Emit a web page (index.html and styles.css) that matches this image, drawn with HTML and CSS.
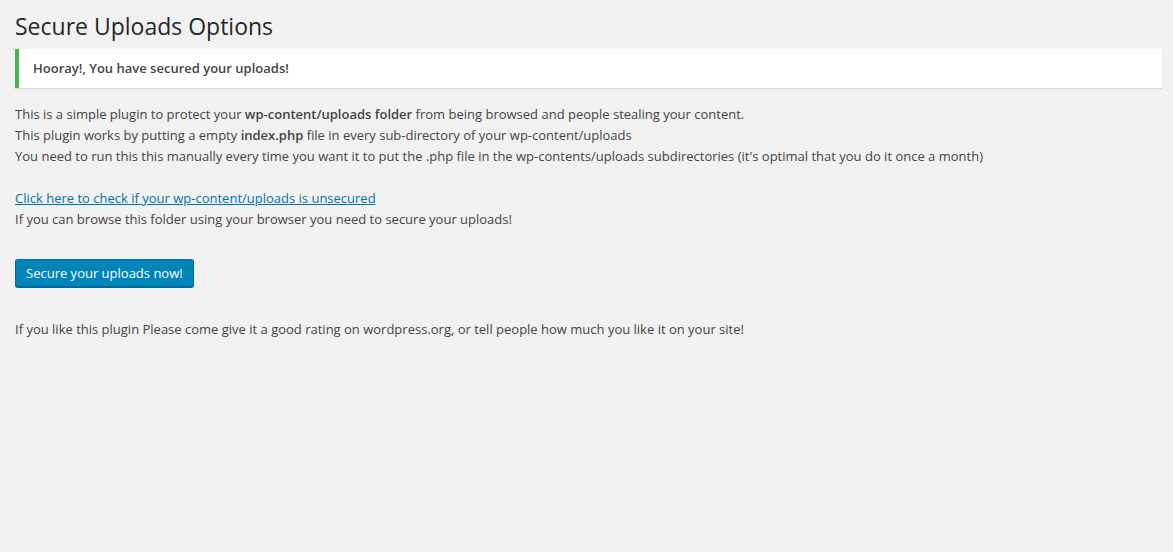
FILE: index.html
```html
<!DOCTYPE html>
<html>
<head>
<meta charset="utf-8">
<link rel="stylesheet" href="styles.css">
</head>
<body>
<div class="wrap">
  <h1 class="title">Secure Uploads Options</h1>
  <div class="notice"><p>Hooray!, You have secured your uploads!</p></div>
  <div class="content">
    This is a simple plugin to protect your <b>wp-content/uploads folder</b> from being browsed and people stealing your content.<br>
    This plugin works by putting a empty <b>index.php</b> file in every sub-directory of your wp-content/uploads<br>
    You need to run this this manually every time you want it to put the .php file in the wp-contents/uploads subdirectories (it's optimal that you do it once a month)<br>
    <br>
    <a href="#">Click here to check if your wp-content/uploads is unsecured</a><br>
    If you can browse this folder using your browser you need to secure your uploads!
  </div>
  <div class="actions"><button class="button-primary">Secure your uploads now!</button></div>
  <div class="footer-text">If you like this plugin Please come give it a good rating on wordpress.org, or tell people how much you like it on your site!</div>
</div>
</body>
</html>
```
FILE: styles.css
```css
html, body { margin: 0; padding: 0; background: #f1f1f1; }
body {
  font-family: "Open Sans", sans-serif;
  font-size: 13px;
  color: #444;
  line-height: 1.4em;
}
.wrap { padding: 3px 11px 0 15px; }
.title {
  margin: 0;
  padding: 9px 0 4px;
  font-size: 23px;
  font-weight: 400;
  line-height: 29px;
  color: #23282d;
}
.notice {
  margin: 4px 0 16px;
  background: #fff;
  border-left: 4px solid #46b450;
  box-shadow: 0 1px 1px 0 rgba(0,0,0,.1);
  padding: 1px 12px;
}
.notice p {
  margin: .5em 0;
  padding: 2px;
  font-weight: 600;
  line-height: 1.5;
}
.content { line-height: 21px; }
.content b { font-weight: 600; }
.content a { color: #0073aa; text-decoration: underline; }
.actions { margin-top: 29px; }
.button-primary {
  font-family: "Open Sans", sans-serif;
  font-size: 13px;
  height: 28px;
  line-height: 26px;
  padding: 0 10px 1px;
  background: #0085ba;
  border: 1px solid;
  border-color: #0073aa #006799 #006799;
  box-shadow: 0 1px 0 #006799;
  color: #fff;
  border-radius: 3px;
  cursor: pointer;
}
.footer-text { margin-top: 32px; line-height: 21px; }
```
